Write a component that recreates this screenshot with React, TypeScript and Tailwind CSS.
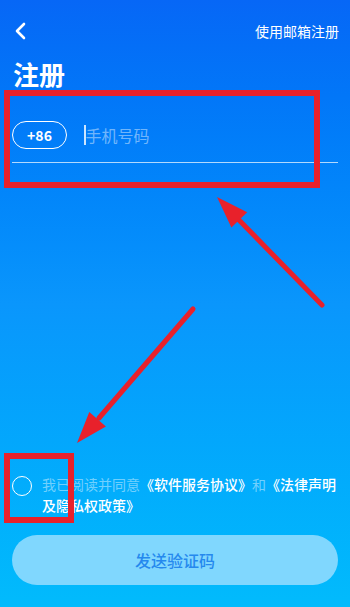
import React from "react";

const FONT = { fontFamily: '"Noto Sans CJK SC", "Noto Sans", sans-serif' };

const App: React.FC = () => {
  return (
    <div
      className="relative min-h-screen w-full flex flex-col bg-linear-to-b from-[#0767f6] via-[#0a96fc] to-[#02bbfc] text-white overflow-hidden"
      style={FONT}
    >
      {/* Top bar */}
      <div className="mt-[9px] h-11 pl-[14px] pr-[11px] flex items-center justify-between">
        <svg width="14" height="18" viewBox="0 0 14 18" fill="none">
          <path d="M10 2 L3 9 L10 16" stroke="white" strokeWidth="2.6" strokeLinecap="round" strokeLinejoin="round" />
        </svg>
        <span className="text-[14px] leading-none">使用邮箱注册</span>
      </div>

      {/* Title */}
      <h1 className="mt-[5px] px-[13px] text-[26px] leading-[32px] font-bold">注册</h1>

      {/* Phone */}
      <div className="mt-[31px] mx-3 pb-[13px] flex items-center border-b border-white/70">
        <div className="w-[55px] h-7 rounded-full border border-white flex items-center justify-center text-[14px] font-bold">
          +86
        </div>
        <span className="ml-[17px] w-[1.5px] h-5 bg-white/80" />
        <span className="text-[16px] text-white/45">手机号码</span>
      </div>

      <div className="flex-1" />

      {/* Agreement */}
      <div className="px-3 flex items-start gap-[10px]">
        <div className="mt-[1px] w-5 h-5 shrink-0 rounded-full border-[1.5px] border-white" />
        <p className="text-[14px] leading-[21px] -mt-[0.5px]">
          <span className="text-white/45">我已阅读并同意</span>
          <span className="font-medium">《软件服务协议》</span>
          <span className="text-white/45">和</span>
          <span className="font-medium">《法律声明及隐私权政策》</span>
        </p>
      </div>

      {/* Button */}
      <button className="mt-[19px] mb-[22px] mx-3 h-[50px] rounded-full bg-[#80d7fe] text-[#2589ee] text-[16px] font-medium">
        发送验证码
      </button>

      {/* Red annotation boxes */}
      <div className="absolute left-[4px] top-[90px] w-[316px] h-[98px] border-[6px] border-[#e8212b] pointer-events-none" />
      <div className="absolute left-[4px] top-[453px] w-[70px] h-[70px] border-[6px] border-[#e8212b] pointer-events-none" />

      {/* Red annotation arrows */}
      <svg className="absolute inset-0 pointer-events-none" width="350" height="607" viewBox="0 0 350 607">
        <line x1="322" y1="305" x2="237" y2="218" stroke="#e8212b" strokeWidth="5" strokeLinecap="round" />
        <polygon points="217,197 247.2,212.2 231.4,227.6" fill="#e8212b" />
        <line x1="193" y1="309" x2="99" y2="418" stroke="#e8212b" strokeWidth="5" strokeLinecap="round" />
        <polygon points="77,443 105.9,426.4 89.3,412" fill="#e8212b" />
      </svg>
    </div>
  );
};

export default App;
